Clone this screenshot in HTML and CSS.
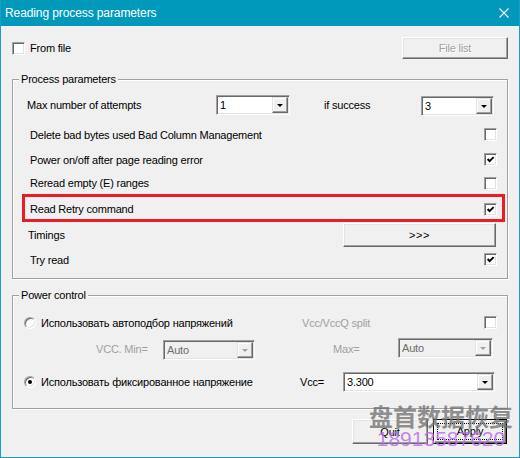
FILE: index.html
```html
<html>
    <head>
        <meta charset="utf-8">
        <meta name="viewport" content="width=device-width, initial-scale=1.0">
        <title>Reading process parameters</title>
        <link rel="stylesheet" href="styles.css">
    </head>
    <body>
        <div class="window">
            <div class="titlebar">
                <span class="title">Reading process parameters</span>
                <svg class="close" width="10" height="10" viewBox="0 0 10 10"><path d="M0.5 0.5L9.5 9.5M9.5 0.5L0.5 9.5" stroke="#fff" stroke-width="1.1" fill="none"/></svg>
            </div>

            <div class="client">
                <div class="top-row">
                    <label class="check-label"><span class="checkbox"></span>From file</label>
                    <button class="btn btn-file" type="button" disabled>File list</button>
                </div>

                <div class="group group-process">
                    <span class="legend">Process parameters</span>

                    <div class="row row-attempts">
                        <span class="lbl-attempts">Max number of attempts</span>
                        <span class="combo combo-attempts"><span class="combo-value">1</span><span class="combo-btn"><i class="arrow"></i></span></span>
                        <span class="lbl-success">if success</span>
                        <span class="combo combo-success"><span class="combo-value">3</span><span class="combo-btn"><i class="arrow"></i></span></span>
                    </div>

                    <div class="row row-check row-delete">
                        <span>Delete bad bytes used Bad Column Management</span>
                        <span class="checkbox"></span>
                    </div>
                    <div class="row row-check">
                        <span>Power on/off after page reading error</span>
                        <span class="checkbox"><svg class="tick" width="11" height="11" viewBox="0 0 11 11"><path d="M2.6 5L4.6 7.2L8.6 3.2" stroke="#000" stroke-width="1.9" fill="none"/></svg></span>
                    </div>
                    <div class="row row-check row-reread">
                        <span>Reread empty (E) ranges</span>
                        <span class="checkbox"></span>
                    </div>

                    <div class="highlight">
                        <div class="row row-retry">
                            <span>Read Retry command</span>
                            <span class="checkbox"><svg class="tick" width="11" height="11" viewBox="0 0 11 11"><path d="M2.6 5L4.6 7.2L8.6 3.2" stroke="#000" stroke-width="1.9" fill="none"/></svg></span>
                        </div>
                    </div>

                    <div class="row row-timings">
                        <span>Timings</span>
                        <button class="btn btn-timings" type="button">&gt;&gt;&gt;</button>
                    </div>
                    <div class="row row-check">
                        <span>Try read</span>
                        <span class="checkbox"><svg class="tick" width="11" height="11" viewBox="0 0 11 11"><path d="M2.6 5L4.6 7.2L8.6 3.2" stroke="#000" stroke-width="1.9" fill="none"/></svg></span>
                    </div>
                </div>

                <div class="group group-power">
                    <span class="legend">Power control</span>

                    <div class="row row-p1">
                        <label class="radio-label"><span class="radio"></span>Использовать автоподбор напряжений</label>
                        <span class="disabled">Vcc/VccQ split</span>
                        <span class="checkbox checkbox-right"></span>
                    </div>

                    <div class="row row-p2">
                        <span class="disabled lbl-min">VCC. Min=</span>
                        <span class="combo combo-off combo-min"><span class="combo-value">Auto</span><span class="combo-btn"><i class="arrow"></i></span></span>
                        <span class="disabled lbl-max">Max=</span>
                        <span class="combo combo-off combo-max"><span class="combo-value">Auto</span><span class="combo-btn"><i class="arrow"></i></span></span>
                    </div>

                    <div class="row row-p3">
                        <label class="radio-label radio-label-fixed"><span class="radio radio-on"></span>Использовать фиксированное напряжение</label>
                        <span class="lbl-vcc">Vcc=</span>
                        <span class="combo combo-vcc"><span class="combo-value">3.300</span><span class="combo-btn"><i class="arrow"></i></span></span>
                    </div>
                </div>

                <div class="actions">
                    <button class="btn btn-quit" type="button">Quit</button>
                    <button class="btn btn-apply" type="button"><span class="focus">Apply</span></button>
                </div>
            </div>

            <div class="watermark">
                <span class="wm-cn">盘首数据恢复</span>
                <span class="wm-num">18913587620</span>
            </div>
        </div>
    </body>
</html>
```

FILE: styles.css
```css
* {
    box-sizing: border-box;
}

html, body {
    margin: 0;
}

body {
    font-family: "Liberation Sans", Arial, sans-serif;
    font-size: 11px;
    letter-spacing: -0.2px;
    color: #000;
    background: #f0f0f0;
}

.window {
    position: relative;
    width: 520px;
    height: 458px;
    border: 1px solid #1a9cc6;
    border-top: none;
    background: #f0f0f0;
    overflow: hidden;
}

.titlebar {
    height: 26px;
    margin: 0 -1px;
    padding: 0 11px 0 5px;
    display: flex;
    align-items: center;
    justify-content: space-between;
    background: #0099bc;
    color: #fff;
    font-size: 12px;
    letter-spacing: -0.1px;
}

.close {
    display: block;
}

.client {
    padding: 11px 11px 0 11px;
    display: flex;
    flex-direction: column;
}

/* generic controls */

.checkbox {
    width: 13px;
    height: 13px;
    flex: none;
    display: flex;
    align-items: center;
    justify-content: center;
    background: #fff;
    border: 1px solid;
    border-color: #a0a0a0 #fff #fff #a0a0a0;
    box-shadow: inset 1px 1px 0 #696969, inset -1px -1px 0 #e3e3e3;
}

.tick {
    display: block;
}

.radio {
    width: 12px;
    height: 12px;
    flex: none;
    display: flex;
    align-items: center;
    justify-content: center;
    border-radius: 50%;
    background: #fff;
    border: 1px solid;
    border-color: #a0a0a0 #fff #fff #a0a0a0;
    box-shadow: inset 1px 1px 0 #696969, inset -1px -1px 0 #e3e3e3;
}

.radio-on::after {
    content: "";
    width: 4px;
    height: 4px;
    border-radius: 50%;
    background: #000;
}

.btn {
    padding: 0;
    font-family: inherit;
    font-size: 11px;
    letter-spacing: -0.2px;
    color: #000;
    background: #f0f0f0;
    border: 1px solid;
    border-color: #fff #696969 #696969 #fff;
    box-shadow: inset -1px -1px 0 #a0a0a0, inset 1px 1px 0 #e3e3e3;
}

.btn:disabled {
    color: #a0a0a0;
    text-shadow: 1px 1px 0 #fff;
}

.combo {
    height: 20px;
    flex: none;
    display: flex;
    align-items: stretch;
    padding: 1px;
    background: #fff;
    border: 1px solid;
    border-color: #a0a0a0 #fff #fff #a0a0a0;
    box-shadow: inset 1px 1px 0 #696969, inset -1px -1px 0 #e3e3e3;
}

.combo-value {
    flex: 1;
    padding-left: 2px;
    line-height: 16px;
}

.combo-btn {
    width: 16px;
    display: flex;
    align-items: center;
    justify-content: center;
    background: #f0f0f0;
    border: 1px solid;
    border-color: #e3e3e3 #696969 #696969 #e3e3e3;
    box-shadow: inset -1px -1px 0 #a0a0a0, inset 1px 1px 0 #fff;
}

.arrow {
    width: 0;
    height: 0;
    margin-top: 1px;
    border-left: 3px solid transparent;
    border-right: 3px solid transparent;
    border-top: 3px solid #000;
}

.combo-off {
    background: #f0f0f0;
    color: #6d6d6d;
}

.combo-off .arrow {
    border-top-color: #a0a0a0;
}

.disabled {
    color: #a0a0a0;
}

/* top row */

.top-row {
    height: 22px;
    display: flex;
    align-items: center;
    justify-content: space-between;
}

.check-label {
    display: flex;
    align-items: center;
    gap: 5px;
}

.btn-file {
    width: 106px;
    height: 22px;
}

/* group boxes */

.group {
    width: 496px;
    display: flex;
    flex-direction: column;
    border: 1px solid #a0a0a0;
    box-shadow: 1px 1px 0 #fff, inset 1px 1px 0 #fff;
}

.legend {
    align-self: flex-start;
    margin: -7px 0 0 6px;
    padding: 0 2px;
    line-height: 13px;
    background: #f0f0f0;
}

.group-process {
    margin-top: 20px;
    height: 200px;
}

.row {
    display: flex;
    align-items: center;
    padding: 0 10px 0 17px;
}

.row-attempts {
    margin-top: 8px;
    height: 21px;
    padding-left: 14px;
}

.lbl-attempts {
    width: 189px;
}

.combo-attempts {
    width: 74px;
}

.lbl-success {
    width: 97px;
    margin-left: 34px;
}

.combo-success {
    width: 73px;
    margin-top: 3px;
}

.row-check {
    height: 25px;
    justify-content: space-between;
}

.row-delete {
    margin-top: 7px;
}

.row-reread {
    height: 22px;
}

.highlight {
    height: 28px;
    margin: 0 2px 0 9px;
    border: 3px solid #ed1c24;
}

.row-retry {
    height: 22px;
    padding: 2px 5px 0 5px;
    justify-content: space-between;
}

.row-timings {
    margin-top: 1px;
    height: 24px;
    padding: 0 11px 0 15px;
    justify-content: space-between;
}

.btn-timings {
    width: 153px;
    height: 24px;
    letter-spacing: 0.5px;
}

.group-power {
    margin-top: 16px;
    height: 114px;
}

.row-p1 {
    margin-top: 9px;
    height: 23px;
    padding-left: 11px;
}

.radio-label {
    width: 278px;
    display: flex;
    align-items: center;
    gap: 5px;
}

.checkbox-right {
    margin-left: auto;
    margin-top: -1px;
}

.row-p2 {
    margin-top: 3px;
    height: 24px;
    padding-left: 83px;
}

.lbl-min {
    width: 67px;
}

.combo-min {
    width: 92px;
    margin-top: 2px;
}

.lbl-max {
    width: 65px;
    margin-left: 78px;
}

.combo-max {
    width: 95px;
    margin-top: -2px;
}

.row-p3 {
    margin-top: 10px;
    height: 21px;
    padding-left: 11px;
}

.radio-label-fixed {
    width: 276px;
}

.lbl-vcc {
    width: 43px;
}

.combo-vcc {
    width: 152px;
}

/* bottom buttons */

.actions {
    margin-top: 10px;
    padding-right: 1px;
    display: flex;
    justify-content: flex-end;
    gap: 5px;
}

.btn-quit {
    width: 76px;
    height: 25px;
}

.btn-apply {
    width: 74px;
    height: 25px;
    padding: 3px;
    border-color: #000;
    box-shadow: inset 1px 1px 0 #fff, inset -1px -1px 0 #696969, inset -2px -2px 0 #a0a0a0;
}

.focus {
    display: block;
    height: 100%;
    line-height: 15px;
    border: 1px dotted #000;
}

/* watermark over the buttons */

.watermark {
    position: absolute;
    left: 368px;
    top: 401px;
    display: flex;
    flex-direction: column;
    align-items: center;
    pointer-events: none;
    letter-spacing: 0;
}

.wm-cn {
    font-family: "Noto Sans CJK SC", sans-serif;
    font-size: 24px;
    font-weight: 700;
    line-height: 30px;
    color: rgba(110, 110, 110, 0.75);
}

.wm-num {
    margin-top: -3px;
    font-family: "Liberation Sans", Arial, sans-serif;
    font-size: 21px;
    line-height: 22px;
    color: rgba(190, 110, 235, 0.85);
}
```
